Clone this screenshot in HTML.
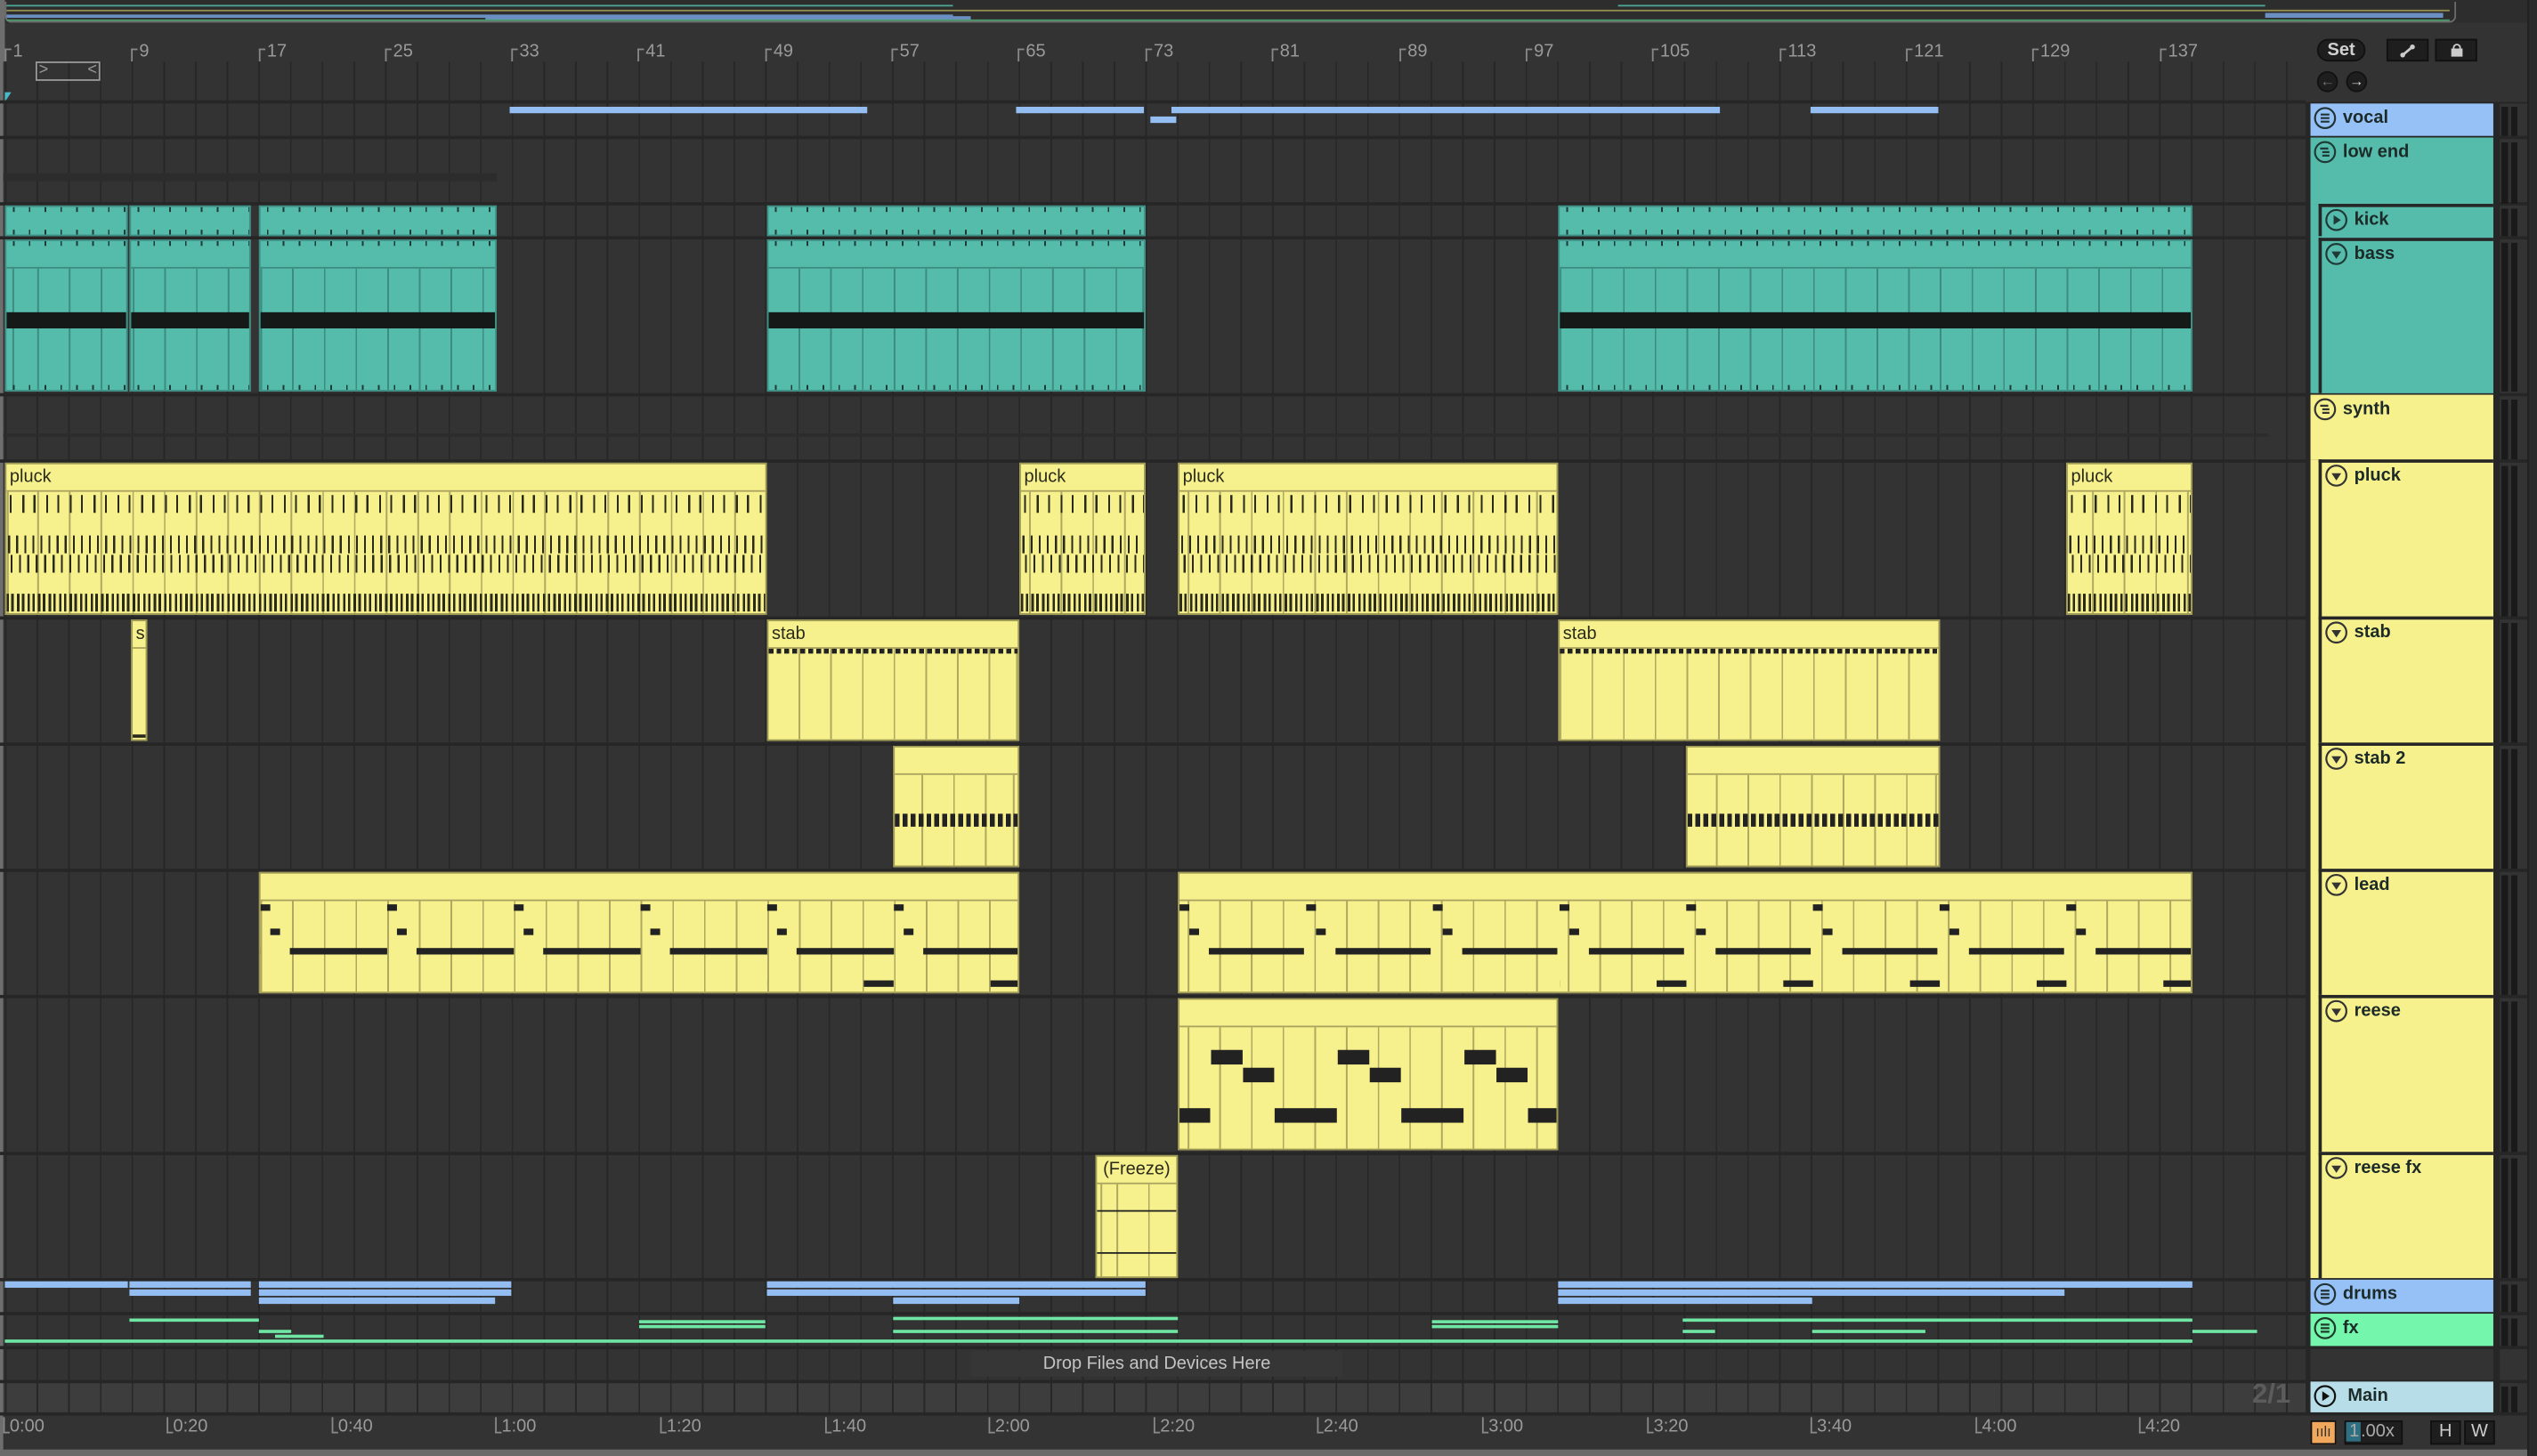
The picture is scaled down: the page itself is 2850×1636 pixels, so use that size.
<!DOCTYPE html>
<html><head><meta charset="utf-8">
<style>
*{margin:0;padding:0;box-sizing:border-box}
html,body{width:2850px;height:1636px;overflow:hidden;background:#2b2b2b}
#s{position:absolute;left:0;top:0;width:1568px;height:900px;transform:scale(1.81760,1.81778);transform-origin:0 0;background:#333;font-family:"Liberation Sans",sans-serif;overflow:hidden}
.a{position:absolute}
.row{position:absolute;left:2px;width:1423px;background-color:#333;
 background-image:repeating-linear-gradient(90deg,#272727 0 1px,transparent 1px 19.58px);background-position:1px 0}
.sep{position:absolute;left:0;width:1562px;height:2px;background:#262626}
.clip{position:absolute;border:1px solid #a19c58;background-color:#f6f18c;overflow:hidden}
.y{background-color:#f6f18c;border-color:#9e9955}
.t{background-color:#55bbab;border-color:#3f8f84}
.hd{position:absolute;left:0;right:0;top:0;height:17px;border-bottom:1px solid #aaa35f;font-size:11px;color:#2a2a1a;padding:2px 0 0 2px}
.body{position:absolute;left:0;right:0;bottom:0}
.gy{background-image:repeating-linear-gradient(90deg,#aea860 0 1px,transparent 1px 19.58px)}
.gt{background-image:repeating-linear-gradient(90deg,#3d8c80 0 1px,transparent 1px 19.58px)}
.n{position:absolute;left:0;right:0}
.tk{position:absolute;left:0;right:0;height:3px;background:repeating-linear-gradient(90deg,transparent 0 4px,#1f3a36 4px 5px,transparent 5px 9.79px)}
.h{position:absolute;left:1428px;width:113px;font-size:11px;font-weight:bold;color:#1c2a28;padding:3px 0 0 20px}
.h svg{position:absolute;left:2px;top:2px;width:14px;height:14px}
.m{position:absolute;left:1546px;width:10px;background:repeating-linear-gradient(90deg,#1a1a1a 0 4px,transparent 4px 6px);border-top:2px solid #333}
.rl{position:absolute;top:26px;font-size:11px;color:#9a9a9a}
.rl:before{content:"";position:absolute;left:-5px;top:4px;width:3px;height:8px;border-left:1px solid #888;border-top:1px solid #888}
.tl{position:absolute;top:876px;font-size:11px;color:#9a9a9a}
.tl:before{content:"";position:absolute;left:-4px;top:0px;width:3px;height:9px;border-left:1px solid #888;border-bottom:1px solid #888}
.bl{position:absolute;background:#94bdf2;height:4px}
.gr{position:absolute;background:#6fe6a4;height:2px}
</style></head><body><div id="s">

<div class="a" style="left:0;top:0;width:1568px;height:14px;background:#2d2d2d"></div>
<div class="a" style="left:3px;top:1px;width:1515px;height:13px;border:1.5px solid #6d6d6d;border-top:none;border-radius:0 0 4px 4px"></div>
<div class="a" style="left:4px;top:3px;width:585px;height:1px;background:#4fa598"></div>
<div class="a" style="left:4px;top:6px;width:1510px;height:1px;background:#958e4e"></div>
<div class="a" style="left:4px;top:9px;width:585px;height:2px;background:#6b8fc2"></div>
<div class="a" style="left:300px;top:10px;width:300px;height:3px;background:#6b8fc2"></div>
<div class="a" style="left:4px;top:12px;width:1510px;height:1px;background:#4d9b6c"></div>
<div class="a" style="left:1000px;top:3px;width:400px;height:1px;background:#4fa598"></div>
<div class="a" style="left:1400px;top:8px;width:110px;height:3px;background:#6b8fc2"></div>
<div class="a" style="left:0;top:0;width:3px;height:900px;background:#6e6e6e"></div>

<div class="rl" style="left:8px">1</div><div class="rl" style="left:86px">9</div><div class="rl" style="left:165px">17</div><div class="rl" style="left:243px">25</div><div class="rl" style="left:321px">33</div><div class="rl" style="left:399px">41</div><div class="rl" style="left:478px">49</div><div class="rl" style="left:556px">57</div><div class="rl" style="left:634px">65</div><div class="rl" style="left:713px">73</div><div class="rl" style="left:791px">81</div><div class="rl" style="left:870px">89</div><div class="rl" style="left:948px">97</div><div class="rl" style="left:1026px">105</div><div class="rl" style="left:1105px">113</div><div class="rl" style="left:1183px">121</div><div class="rl" style="left:1261px">129</div><div class="rl" style="left:1340px">137</div>
<div class="row" style="top:38px;height:25px"></div>
<div class="a" style="left:22px;top:38px;width:40px;height:12px;border:1.3px solid #999;color:#999;font-size:10px;line-height:9px;padding-left:1px">&gt;<span style="float:right;padding-right:1px">&lt;</span></div>
<div class="a" style="left:3px;top:57px;width:0;height:0;border-left:4px solid #49b8c8;border-bottom:6px solid transparent"></div>

<div class="row" style="top:63px;height:22px"></div>
<div class="row" style="top:85px;height:41px"></div>
<div class="row" style="top:126px;height:21px"></div>
<div class="row" style="top:147px;height:97px"></div>
<div class="row" style="top:244px;height:41px"></div>
<div class="row" style="top:285px;height:97px"></div>
<div class="row" style="top:382px;height:78px"></div>
<div class="row" style="top:460px;height:78px"></div>
<div class="row" style="top:538px;height:78px"></div>
<div class="row" style="top:616px;height:97px"></div>
<div class="row" style="top:713px;height:78px"></div>
<div class="row" style="top:791px;height:21px"></div>
<div class="row" style="top:812px;height:21px"></div>
<div class="row" style="top:833px;height:21px"></div>
<div class="row" style="top:854px;height:20px;background-color:#3d3d3d"></div>
<div class="a" style="left:2px;top:874px;width:1560px;height:26px;background:#333"></div>
<div class="a" style="left:2px;top:107px;width:305px;height:5px;background:#2c2c2c"></div>
<div class="a" style="left:2px;top:268px;width:1400px;height:2px;background:#2c2c2c"></div>

<div class="sep" style="top:62px"></div><div class="sep" style="top:84px"></div><div class="sep" style="top:125px"></div><div class="sep" style="top:146px"></div><div class="sep" style="top:243px"></div><div class="sep" style="top:284px"></div><div class="sep" style="top:381px"></div><div class="sep" style="top:459px"></div><div class="sep" style="top:537px"></div><div class="sep" style="top:615px"></div><div class="sep" style="top:712px"></div><div class="sep" style="top:790px"></div><div class="sep" style="top:811px"></div><div class="sep" style="top:832px"></div><div class="sep" style="top:853px"></div><div class="sep" style="top:873px"></div>

<div class="bl" style="left:315px;top:66px;width:221px"></div>
<div class="bl" style="left:628px;top:66px;width:79px"></div>
<div class="bl" style="left:724px;top:66px;width:339px"></div>
<div class="bl" style="left:1119px;top:66px;width:79px"></div>
<div class="bl" style="left:711px;top:72px;width:16px"></div>

<!-- kick -->
<div class="clip t" style="left:3px;top:127px;width:76px;height:19px"><div class="tk" style="top:0"></div><div class="tk" style="bottom:0"></div></div>
<div class="clip t" style="left:80px;top:127px;width:75px;height:19px"><div class="tk" style="top:0"></div><div class="tk" style="bottom:0"></div></div>
<div class="clip t" style="left:160px;top:127px;width:147px;height:19px"><div class="tk" style="top:0"></div><div class="tk" style="bottom:0"></div></div>
<div class="clip t" style="left:474px;top:127px;width:234px;height:19px"><div class="tk" style="top:0"></div><div class="tk" style="bottom:0"></div></div>
<div class="clip t" style="left:963px;top:127px;width:392px;height:19px"><div class="tk" style="top:0"></div><div class="tk" style="bottom:0"></div></div>

<!-- bass -->
<div class="clip t" style="left:3px;top:148px;width:76px;height:94px"><div class="hd" style="border-color:#3d8c80"><div class="tk" style="top:0"></div></div><div class="body gt" style="top:17px;background-position:19px 0"></div><div class="n" style="top:44px;height:10px;background:#151a19"></div><div class="tk" style="bottom:0"></div></div>
<div class="clip t" style="left:80px;top:148px;width:75px;height:94px"><div class="hd" style="border-color:#3d8c80"><div class="tk" style="top:0"></div></div><div class="body gt" style="top:17px;background-position:1px 0"></div><div class="n" style="top:44px;height:10px;background:#151a19"></div><div class="tk" style="bottom:0"></div></div>
<div class="clip t" style="left:160px;top:148px;width:147px;height:94px"><div class="hd" style="border-color:#3d8c80"><div class="tk" style="top:0"></div></div><div class="body gt" style="top:17px;background-position:0 0"></div><div class="n" style="top:44px;height:10px;background:#151a19"></div><div class="tk" style="bottom:0"></div></div>
<div class="clip t" style="left:474px;top:148px;width:234px;height:94px"><div class="hd" style="border-color:#3d8c80"><div class="tk" style="top:0"></div></div><div class="body gt" style="top:17px;background-position:-1px 0"></div><div class="n" style="top:44px;height:10px;background:#151a19"></div><div class="tk" style="bottom:0"></div></div>
<div class="clip t" style="left:963px;top:148px;width:392px;height:94px"><div class="hd" style="border-color:#3d8c80"><div class="tk" style="top:0"></div></div><div class="body gt" style="top:17px;background-position:0 0"></div><div class="n" style="top:44px;height:10px;background:#151a19"></div><div class="tk" style="bottom:0"></div></div>

<!-- pluck -->
<div class="clip y" style="left:3px;top:286px;width:471px;height:94px"><div class="hd">pluck</div><div class="body gy" style="top:17px;background-position:19px 0"></div>
 <div class="n" style="top:19px;height:11px;background:repeating-linear-gradient(90deg,transparent 0 2px,#2a2a1c 2px 3.2px,transparent 3.2px 9.79px,#2a2a1c 9.79px 11px,transparent 11px 14.7px)"></div>
 <div class="n" style="top:44px;height:11px;background:repeating-linear-gradient(90deg,transparent 0 1px,#2a2a1c 1px 2.2px,transparent 2.2px 5px)"></div>
 <div class="n" style="top:56px;height:11px;background:repeating-linear-gradient(90deg,transparent 0 2.5px,#2a2a1c 2.5px 3.7px,transparent 3.7px 5.2px)"></div>
 <div class="n" style="top:80px;height:11px;background:repeating-linear-gradient(90deg,#2a2a1c 0 1.5px,transparent 1.5px 3px,#2a2a1c 3px 4.5px,transparent 4.5px 6.5px)"></div></div>
<div class="clip y" style="left:630px;top:286px;width:78px;height:94px"><div class="hd">pluck</div><div class="body gy" style="top:17px;background-position:5px 0"></div>
 <div class="n" style="top:19px;height:11px;background:repeating-linear-gradient(90deg,transparent 0 2px,#2a2a1c 2px 3.2px,transparent 3.2px 9.79px,#2a2a1c 9.79px 11px,transparent 11px 14.7px)"></div>
 <div class="n" style="top:44px;height:11px;background:repeating-linear-gradient(90deg,transparent 0 1px,#2a2a1c 1px 2.2px,transparent 2.2px 5px)"></div>
 <div class="n" style="top:56px;height:11px;background:repeating-linear-gradient(90deg,transparent 0 2.5px,#2a2a1c 2.5px 3.7px,transparent 3.7px 5.2px)"></div>
 <div class="n" style="top:80px;height:11px;background:repeating-linear-gradient(90deg,#2a2a1c 0 1.5px,transparent 1.5px 3px,#2a2a1c 3px 4.5px,transparent 4.5px 6.5px)"></div></div>
<div class="clip y" style="left:728px;top:286px;width:235px;height:94px"><div class="hd">pluck</div><div class="body gy" style="top:17px;background-position:5px 0"></div>
 <div class="n" style="top:19px;height:11px;background:repeating-linear-gradient(90deg,transparent 0 2px,#2a2a1c 2px 3.2px,transparent 3.2px 9.79px,#2a2a1c 9.79px 11px,transparent 11px 14.7px)"></div>
 <div class="n" style="top:44px;height:11px;background:repeating-linear-gradient(90deg,transparent 0 1px,#2a2a1c 1px 2.2px,transparent 2.2px 5px)"></div>
 <div class="n" style="top:56px;height:11px;background:repeating-linear-gradient(90deg,transparent 0 2.5px,#2a2a1c 2.5px 3.7px,transparent 3.7px 5.2px)"></div>
 <div class="n" style="top:80px;height:11px;background:repeating-linear-gradient(90deg,#2a2a1c 0 1.5px,transparent 1.5px 3px,#2a2a1c 3px 4.5px,transparent 4.5px 6.5px)"></div></div>
<div class="clip y" style="left:1277px;top:286px;width:78px;height:94px"><div class="hd">pluck</div><div class="body gy" style="top:17px;background-position:15px 0"></div>
 <div class="n" style="top:19px;height:11px;background:repeating-linear-gradient(90deg,transparent 0 2px,#2a2a1c 2px 3.2px,transparent 3.2px 9.79px,#2a2a1c 9.79px 11px,transparent 11px 14.7px)"></div>
 <div class="n" style="top:44px;height:11px;background:repeating-linear-gradient(90deg,transparent 0 1px,#2a2a1c 1px 2.2px,transparent 2.2px 5px)"></div>
 <div class="n" style="top:56px;height:11px;background:repeating-linear-gradient(90deg,transparent 0 2.5px,#2a2a1c 2.5px 3.7px,transparent 3.7px 5.2px)"></div>
 <div class="n" style="top:80px;height:11px;background:repeating-linear-gradient(90deg,#2a2a1c 0 1.5px,transparent 1.5px 3px,#2a2a1c 3px 4.5px,transparent 4.5px 6.5px)"></div></div>

<!-- stab -->
<div class="clip y" style="left:81px;top:383px;width:10px;height:75px"><div class="hd">s</div><div class="n" style="top:70px;height:2px;background:#2a2a1c"></div></div>
<div class="clip y" style="left:474px;top:383px;width:156px;height:75px"><div class="hd">stab</div><div class="body gy" style="top:17px;background-position:-1px 0"></div><div class="n" style="top:17px;height:3px;background:repeating-linear-gradient(90deg,#222 0 3px,transparent 3px 4.9px)"></div></div>
<div class="clip y" style="left:963px;top:383px;width:236px;height:75px"><div class="hd">stab</div><div class="body gy" style="top:17px;background-position:0 0"></div><div class="n" style="top:17px;height:3px;background:repeating-linear-gradient(90deg,#222 0 3px,transparent 3px 4.9px)"></div></div>

<!-- stab 2 -->
<div class="clip y" style="left:552px;top:461px;width:78px;height:75px"><div class="hd"></div><div class="body gy" style="top:17px;background-position:-3px 0"></div><div class="n" style="top:41px;height:8px;background:repeating-linear-gradient(90deg,#222 0 3px,transparent 3px 4.9px)"></div></div>
<div class="clip y" style="left:1042px;top:461px;width:157px;height:75px"><div class="hd"></div><div class="body gy" style="top:17px;background-position:-2px 0"></div><div class="n" style="top:41px;height:8px;background:repeating-linear-gradient(90deg,#222 0 3px,transparent 3px 4.9px)"></div></div>

<!-- lead -->
<div class="clip y" style="left:160px;top:539px;width:470px;height:75px"><div class="hd"></div><div class="body gy" style="top:17px;background-position:0 0"></div>
 <div class="n" style="top:19px;height:4px;background:linear-gradient(90deg,#222 0 6px,transparent 6px) 0 0/78.3px 4px repeat-x"></div>
 <div class="n" style="top:34px;height:4px;background:linear-gradient(90deg,transparent 0 6px,#222 6px 12px,transparent 12px) 0 0/78.3px 4px repeat-x"></div>
 <div class="n" style="top:46px;height:4px;background:linear-gradient(90deg,transparent 0 18px,#222 18px 78px) 0 0/78.3px 4px repeat-x"></div>
 <div class="n" style="top:66px;height:4px;left:313px;background:linear-gradient(90deg,transparent 0 60px,#222 60px 78px) 0 0/78.3px 4px repeat-x"></div></div>
<div class="clip y" style="left:728px;top:539px;width:627px;height:75px"><div class="hd"></div><div class="body gy" style="top:17px;background-position:5px 0"></div>
 <div class="n" style="top:19px;height:4px;background:linear-gradient(90deg,#222 0 6px,transparent 6px) 0 0/78.3px 4px repeat-x"></div>
 <div class="n" style="top:34px;height:4px;background:linear-gradient(90deg,transparent 0 6px,#222 6px 12px,transparent 12px) 0 0/78.3px 4px repeat-x"></div>
 <div class="n" style="top:46px;height:4px;background:linear-gradient(90deg,transparent 0 18px,#222 18px 77px,transparent 77px) 0 0/78.3px 4px repeat-x"></div>
 <div class="n" style="top:66px;height:4px;left:235px;background:linear-gradient(90deg,transparent 0 60px,#222 60px 78px) 0 0/78.3px 4px repeat-x"></div></div>

<!-- reese -->
<div class="clip y" style="left:728px;top:617px;width:235px;height:94px"><div class="hd"></div><div class="body gy" style="top:17px;background-position:5px 0"></div>
 <div class="n" style="top:67px;height:9px;background:linear-gradient(90deg,#222 0 19px,transparent 19px 58.7px,#222 58.7px 78.3px) 0 0/78.3px 9px repeat-x"></div>
 <div class="n" style="top:31px;height:9px;background:linear-gradient(90deg,transparent 0 19.6px,#222 19.6px 39px,transparent 39px) 0 0/78.3px 9px repeat-x"></div>
 <div class="n" style="top:42px;height:9px;background:linear-gradient(90deg,transparent 0 39.2px,#222 39.2px 58.5px,transparent 58.5px) 0 0/78.3px 9px repeat-x"></div></div>

<div class="clip y" style="left:677px;top:714px;width:51px;height:76px"><div class="hd" style="text-align:center;padding-left:0">(Freeze)</div><div class="body gy" style="top:17px;background-position:12px 0"></div>
 <div class="n" style="top:33px;height:1px;background:#222"></div><div class="n" style="top:59px;height:1px;background:#222"></div></div>

<!-- drums -->
<div class="bl" style="left:3px;top:792px;width:76px"></div>
<div class="bl" style="left:80px;top:792px;width:75px"></div><div class="bl" style="left:80px;top:797px;width:75px"></div>
<div class="bl" style="left:160px;top:792px;width:156px"></div><div class="bl" style="left:160px;top:797px;width:156px"></div><div class="bl" style="left:160px;top:802px;width:146px"></div>
<div class="bl" style="left:474px;top:792px;width:234px"></div><div class="bl" style="left:474px;top:797px;width:234px"></div><div class="bl" style="left:552px;top:802px;width:78px"></div>
<div class="bl" style="left:963px;top:792px;width:392px"></div><div class="bl" style="left:963px;top:797px;width:313px"></div><div class="bl" style="left:963px;top:802px;width:157px"></div>

<div class="gr" style="left:3px;top:828px;width:1352px"></div>
<div class="gr" style="left:80px;top:815px;width:80px"></div>
<div class="gr" style="left:160px;top:822px;width:20px"></div>
<div class="gr" style="left:170px;top:825px;width:30px"></div>
<div class="gr" style="left:395px;top:816px;width:78px"></div><div class="gr" style="left:395px;top:819px;width:78px"></div>
<div class="gr" style="left:552px;top:814px;width:176px"></div>
<div class="gr" style="left:552px;top:822px;width:176px"></div>
<div class="gr" style="left:885px;top:816px;width:78px"></div><div class="gr" style="left:885px;top:819px;width:78px"></div>
<div class="gr" style="left:1040px;top:815px;width:315px"></div>
<div class="gr" style="left:1040px;top:822px;width:20px"></div>
<div class="gr" style="left:1120px;top:822px;width:70px"></div>
<div class="gr" style="left:1355px;top:822px;width:40px"></div>

<div class="a" style="left:600px;top:835px;width:230px;text-align:center;font-size:11px;color:#c4c4c4;background:#363636;line-height:16px">Drop Files and Devices Here</div>
<div class="a" style="left:1392px;top:852px;font-size:17px;font-weight:bold;color:#5c5c5c">2/1</div>

<div class="tl" style="left:6px">0:00</div><div class="tl" style="left:107px">0:20</div><div class="tl" style="left:209px">0:40</div><div class="tl" style="left:310px">1:00</div><div class="tl" style="left:412px">1:20</div><div class="tl" style="left:514px">1:40</div><div class="tl" style="left:615px">2:00</div><div class="tl" style="left:717px">2:20</div><div class="tl" style="left:818px">2:40</div><div class="tl" style="left:920px">3:00</div><div class="tl" style="left:1022px">3:20</div><div class="tl" style="left:1123px">3:40</div><div class="tl" style="left:1225px">4:00</div><div class="tl" style="left:1326px">4:20</div>
<div class="a" style="left:0;top:896px;width:1568px;height:4px;background:#6a6a6a"></div>

<!-- right panel -->
<div class="a" style="left:1425px;top:14px;width:137px;height:49px;background:#333"></div>
<div class="a" style="left:1425px;top:63px;width:3px;height:811px;background:#262626"></div>
<div class="a" style="left:1541px;top:63px;width:4px;height:811px;background:#262626"></div>
<div class="a" style="left:1562px;top:0;width:6px;height:900px;background:#2a2a2a;border-left:1px solid #222"></div>
<div class="a" style="left:1432px;top:24px;width:30px;height:14px;border-radius:7px;background:#1e1e1e;border:1px solid #111;color:#d0d0d0;font-size:11px;font-weight:bold;text-align:center;line-height:12px">Set</div>
<div class="a" style="left:1475px;top:24px;width:26px;height:14px;background:#1e1e1e;border:1px solid #111"><svg class="a" style="left:7px;top:2px" width="10" height="9" viewBox="0 0 10 9"><path d="M2 7L8 2" stroke="#ccc" stroke-width="1.5"/><circle cx="2" cy="7" r="1.5" fill="#ccc"/><circle cx="8" cy="2" r="1.5" fill="#ccc"/></svg></div>
<div class="a" style="left:1505px;top:24px;width:26px;height:14px;background:#1e1e1e;border:1px solid #111"><div class="a" style="left:9px;top:5px;width:7px;height:5px;background:#ccc"></div><div class="a" style="left:10px;top:2px;width:5px;height:5px;border:1.3px solid #ccc;border-radius:3px 3px 0 0"></div></div>
<div class="a" style="left:1432px;top:44px;width:13px;height:13px;border-radius:50%;background:#1e1e1e;border:1px solid #111;color:#777;font-size:9px;text-align:center;line-height:11px">←</div>
<div class="a" style="left:1450px;top:44px;width:13px;height:13px;border-radius:50%;background:#1e1e1e;border:1px solid #111;color:#ddd;font-size:9px;text-align:center;line-height:11px">→</div>

<div class="h" style="top:64px;height:20px;background:#96c1f7"><svg viewBox="0 0 14 14"><circle cx="7" cy="7" r="6.2" fill="none" stroke="#233" stroke-width="1.2"/><path d="M4.3 4.8h5.4M4.3 7h5.4M4.3 9.2h5.4" stroke="#233" stroke-width="1.2"/></svg>vocal</div>
<div class="h" style="top:85px;height:41px;background:#55bbab"><svg viewBox="0 0 14 14"><circle cx="7" cy="7" r="6.2" fill="none" stroke="#1f3a36" stroke-width="1.2"/><path d="M4 4.8h5M5.3 7h4.4M5.3 9.2h4.4" stroke="#1f3a36" stroke-width="1.2"/></svg>low end</div>
<div class="a" style="left:1428px;top:126px;width:113px;height:117px;background:#55bbab"></div>
<div class="h" style="top:126px;left:1433px;width:108px;height:20px;background:#55bbab;border-left:2px solid #262626;border-top:2px solid #262626;padding-top:2px"><svg style="top:1px" viewBox="0 0 14 14"><circle cx="7" cy="7" r="6.2" fill="none" stroke="#1f3a36" stroke-width="1.2"/><path d="M5.3 4v6l4.5-3z" fill="#1f3a36"/></svg>kick</div>
<div class="h" style="top:147px;left:1433px;width:108px;height:96px;background:#55bbab;border-left:2px solid #262626;border-top:2px solid #262626;padding-top:2px"><svg style="top:1px" viewBox="0 0 14 14"><circle cx="7" cy="7" r="6.2" fill="none" stroke="#1f3a36" stroke-width="1.2"/><path d="M4 5.5h6l-3 4.5z" fill="#1f3a36"/></svg>bass</div>
<div class="h" style="top:244px;height:40px;background:#f6f18d"><svg viewBox="0 0 14 14"><circle cx="7" cy="7" r="6.2" fill="none" stroke="#333" stroke-width="1.2"/><path d="M4 4.8h5M5.3 7h4.4M5.3 9.2h4.4" stroke="#333" stroke-width="1.2"/></svg>synth</div>
<div class="a" style="left:1428px;top:284px;width:113px;height:506px;background:#f6f18d"></div>
<div class="h" style="top:284px;left:1433px;width:108px;height:97px;background:#f6f18d;border-left:2px solid #262626;border-top:2px solid #262626;padding-top:2px"><svg style="top:1px" viewBox="0 0 14 14"><circle cx="7" cy="7" r="6.2" fill="none" stroke="#333" stroke-width="1.2"/><path d="M4 5.5h6l-3 4.5z" fill="#333"/></svg>pluck</div>
<div class="h" style="top:381px;left:1433px;width:108px;height:78px;background:#f6f18d;border-left:2px solid #262626;border-top:2px solid #262626;padding-top:2px"><svg style="top:1px" viewBox="0 0 14 14"><circle cx="7" cy="7" r="6.2" fill="none" stroke="#333" stroke-width="1.2"/><path d="M4 5.5h6l-3 4.5z" fill="#333"/></svg>stab</div>
<div class="h" style="top:459px;left:1433px;width:108px;height:78px;background:#f6f18d;border-left:2px solid #262626;border-top:2px solid #262626;padding-top:2px"><svg style="top:1px" viewBox="0 0 14 14"><circle cx="7" cy="7" r="6.2" fill="none" stroke="#333" stroke-width="1.2"/><path d="M4 5.5h6l-3 4.5z" fill="#333"/></svg>stab 2</div>
<div class="h" style="top:537px;left:1433px;width:108px;height:78px;background:#f6f18d;border-left:2px solid #262626;border-top:2px solid #262626;padding-top:2px"><svg style="top:1px" viewBox="0 0 14 14"><circle cx="7" cy="7" r="6.2" fill="none" stroke="#333" stroke-width="1.2"/><path d="M4 5.5h6l-3 4.5z" fill="#333"/></svg>lead</div>
<div class="h" style="top:615px;left:1433px;width:108px;height:97px;background:#f6f18d;border-left:2px solid #262626;border-top:2px solid #262626;padding-top:2px"><svg style="top:1px" viewBox="0 0 14 14"><circle cx="7" cy="7" r="6.2" fill="none" stroke="#333" stroke-width="1.2"/><path d="M4 5.5h6l-3 4.5z" fill="#333"/></svg>reese</div>
<div class="h" style="top:712px;left:1433px;width:108px;height:78px;background:#f6f18d;border-left:2px solid #262626;border-top:2px solid #262626;padding-top:2px"><svg style="top:1px" viewBox="0 0 14 14"><circle cx="7" cy="7" r="6.2" fill="none" stroke="#333" stroke-width="1.2"/><path d="M4 5.5h6l-3 4.5z" fill="#333"/></svg>reese fx</div>
<div class="h" style="top:791px;height:20px;background:#96c1f7"><svg viewBox="0 0 14 14"><circle cx="7" cy="7" r="6.2" fill="none" stroke="#233" stroke-width="1.2"/><path d="M4.3 4.8h5.4M4.3 7h5.4M4.3 9.2h5.4" stroke="#233" stroke-width="1.2"/></svg>drums</div>
<div class="h" style="top:812px;height:20px;background:#74f7ad"><svg viewBox="0 0 14 14"><circle cx="7" cy="7" r="6.2" fill="none" stroke="#1f3a2a" stroke-width="1.2"/><path d="M4.3 4.8h5.4M4.3 7h5.4M4.3 9.2h5.4" stroke="#1f3a2a" stroke-width="1.2"/></svg>fx</div>
<div class="h" style="top:854px;height:19px;background:#b7dde8;padding-left:23px"><svg viewBox="0 0 14 14"><circle cx="7" cy="7" r="6.2" fill="none" stroke="#111" stroke-width="1.2"/><path d="M5.3 4v6l4.5-3z" fill="#111"/></svg>Main</div>

<div class="m" style="top:64px;height:20px"></div><div class="m" style="top:86px;height:40px"></div><div class="m" style="top:127px;height:19px"></div><div class="m" style="top:148px;height:94px"></div><div class="m" style="top:245px;height:39px"></div><div class="m" style="top:286px;height:95px"></div><div class="m" style="top:383px;height:76px"></div><div class="m" style="top:461px;height:76px"></div><div class="m" style="top:539px;height:76px"></div><div class="m" style="top:617px;height:95px"></div><div class="m" style="top:714px;height:76px"></div><div class="m" style="top:792px;height:19px"></div><div class="m" style="top:813px;height:19px"></div><div class="m" style="top:855px;height:18px"></div>

<div class="a" style="left:1428px;top:878px;width:16px;height:15px;background:#f2a85c;border:1px solid #111;color:#333;font-size:9px;text-align:center;line-height:13px">ıılı</div>
<div class="a" style="left:1449px;top:878px;width:36px;height:15px;background:#1e1e1e;border:1px solid #111;font-size:11px;color:#aaa;line-height:13px"><span style="background:#2f6f82;padding:0 1px 0 2px">1</span>.00x</div>
<div class="a" style="left:1502px;top:878px;width:19px;height:15px;background:#1e1e1e;border:1px solid #111;font-size:11px;color:#ccc;text-align:center;line-height:13px">H</div>
<div class="a" style="left:1523px;top:878px;width:19px;height:15px;background:#1e1e1e;border:1px solid #111;font-size:11px;color:#ccc;text-align:center;line-height:13px">W</div>
</div></body></html>
